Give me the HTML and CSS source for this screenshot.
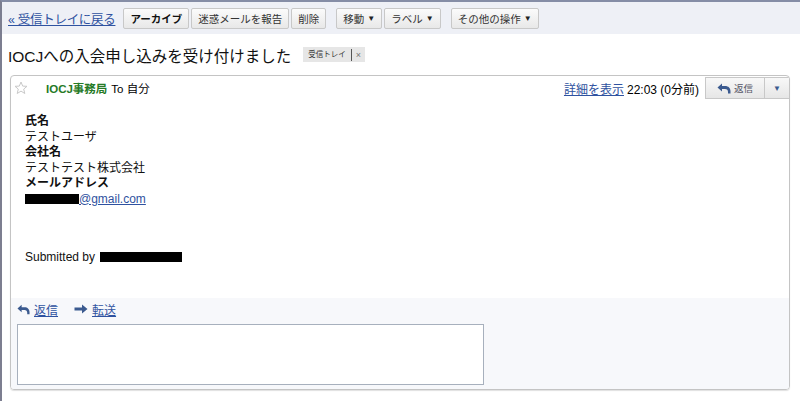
FILE: index.html
```html
<!DOCTYPE html>
<html lang="ja">
<head>
<meta charset="utf-8">
<link rel="stylesheet" href="styles.css">
</head>
<body>
<div class="page">
  <div class="toolbar">
    <a class="back" href="#">« 受信トレイに戻る</a>
    <div class="group">
      <span class="btn bold">アーカイブ</span>
      <span class="btn">迷惑メールを報告</span>
      <span class="btn">削除</span>
    </div>
    <div class="group">
      <span class="btn">移動 <span class="tri">▼</span></span>
      <span class="btn">ラベル <span class="tri">▼</span></span>
    </div>
    <div class="group">
      <span class="btn">その他の操作 <span class="tri">▼</span></span>
    </div>
  </div>
  <div class="subject-row">
    <h1 class="subject">IOCJへの入会申し込みを受け付けました</h1>
    <span class="chip"><span class="chip-name">受信トレイ</span><span class="chip-x">×</span></span>
  </div>
  <div class="card">
    <div class="head">
      <svg class="star" width="14" height="14" viewBox="0 0 14 14"><path d="M7 1 L8.7 5.1 L13 5.3 L9.7 8.1 L10.8 12.5 L7 10.1 L3.2 12.5 L4.3 8.1 L1 5.3 L5.3 5.1 Z" fill="#fff" stroke="#c8c8c8" stroke-width="1"/></svg>
      <span class="sender">IOCJ事務局</span>
      <span class="to">To 自分</span>
      <span class="spacer"></span>
      <a class="details" href="#">詳細を表示</a>
      <span class="time">22:03 (0分前)</span>
      <div class="reply-group">
        <span class="rbtn"><svg width="14" height="11" viewBox="0 0 14 11"><path d="M5 0.5 L0.5 4.5 L5 8.5 L5 6 L8 6 C10 6 11 7.2 11 9 L11 10.5 L13.5 10.5 L13.5 8.5 C13.5 5.2 11.5 3 8 3 L5 3 Z" fill="#3b5a8f"/></svg><span class="rtext">返信</span></span>
        <span class="rdrop">▼</span>
      </div>
    </div>
    <div class="body">
      <div class="b">氏名</div>
      <div>テストユーザ</div>
      <div class="b">会社名</div>
      <div>テストテスト株式会社</div>
      <div class="b">メールアドレス</div>
      <div><a class="mail" href="#"><span class="redact r1"></span>@gmail.com</a></div>
      <div class="submitted">Submitted by <span class="redact r2"></span></div>
    </div>
    <div class="foot">
      <div class="actions">
        <a class="act" href="#"><svg width="13" height="11" viewBox="0 0 14 11"><path d="M5 0.5 L0.5 4.5 L5 8.5 L5 6 L8 6 C10 6 11 7.2 11 9 L11 10.5 L13.5 10.5 L13.5 8.5 C13.5 5.2 11.5 3 8 3 L5 3 Z" fill="#3b5a8f"/></svg><span class="u">返信</span></a>
        <a class="act" href="#"><svg width="14" height="10" viewBox="0 0 14 10"><path d="M0.5 3.5 L8 3.5 L8 0.5 L13.5 5 L8 9.5 L8 6.5 L0.5 6.5 Z" fill="#3b5a8f"/></svg><span class="u">転送</span></a>
      </div>
      <div class="reply-box"></div>
    </div>
  </div>
</div>
</body>
</html>
```
FILE: styles.css
```css
html, body {
  margin: 0;
  padding: 0;
  background: #fff;
}
body {
  font-family: "Liberation Sans", "Noto Sans CJK JP", sans-serif;
  font-size: 12px;
  color: #000;
}
.page {
  width: 798px;
  height: 399px;
  border-left: 2px solid #7c7e90;
  border-top: 2px solid #858da6;
  overflow: hidden;
}
.toolbar {
  height: 32px;
  background: #eef0f6;
  display: flex;
  align-items: center;
  padding-left: 6px;
  gap: 10px;
}
.back {
  color: #2f52a0;
  font-size: 12.5px;
  text-decoration: underline;
  margin-right: -2px;
  letter-spacing: -0.3px;
}
.group {
  display: flex;
  gap: 2px;
}
.btn {
  display: inline-flex;
  align-items: center;
  height: 19px;
  padding: 0 6px;
  font-size: 10.5px;
  color: #333;
  background: linear-gradient(#fbfbfb, #e8e8e8);
  border: 1px solid #c8c8c8;
  border-radius: 2px;
  white-space: nowrap;
}
.btn.bold {
  font-weight: bold;
  color: #111;
}
.tri {
  font-size: 8px;
  margin-left: 3px;
  color: #222;
}
.subject-row {
  display: flex;
  align-items: center;
  height: 41px;
  padding-left: 6px;
}
.subject {
  margin: 0;
  font-weight: normal;
  font-size: 15.5px;
  color: #111;
}
.chip {
  display: inline-flex;
  align-items: center;
  margin-left: 12px;
  height: 15px;
  background: #e6e6e6;
  font-size: 7.5px;
  color: #333;
}
.chip-name {
  padding: 0 5px;
  border-right: 1px solid #555;
  line-height: 12px;
}
.chip-x {
  padding: 0 4px;
  font-size: 9px;
  color: #777;
}
.card {
  margin-left: 8px;
  width: 778px;
  height: 313px;
  border: 1px solid #c4c4c4;
  border-radius: 4px;
  box-shadow: 0 1px 1px #e0e0e0;
  display: flex;
  flex-direction: column;
  overflow: hidden;
}
.head {
  display: flex;
  align-items: center;
  height: 24px;
  padding-left: 3px;
}
.star {
  margin-right: 18px;
}
.sender {
  color: #267a26;
  font-weight: bold;
  font-size: 11.5px;
  margin-right: 4px;
}
.to {
  font-size: 11.5px;
}
.spacer {
  flex: 1;
}
.details {
  color: #2f52a0;
  text-decoration: underline;
  margin-right: 3px;
}
.time {
  margin-right: 6px;
}
.reply-group {
  display: flex;
  align-self: flex-start;
  height: 22px;
  margin-top: 1px;
}
.rbtn {
  display: flex;
  align-items: center;
  gap: 3px;
  width: 58px;
  justify-content: center;
  background: linear-gradient(#f8f8f8, #e6e6e6);
  border: 1px solid #c8c8c8;
  border-right: none;
}
.rtext {
  font-size: 9.5px;
  color: #556;
}
.rdrop {
  display: flex;
  align-items: center;
  justify-content: center;
  width: 24px;
  font-size: 8px;
  color: #3b5a8f;
  background: linear-gradient(#f8f8f8, #e6e6e6);
  border-top: 1px solid #c8c8c8;
  border-left: 1px solid #c8c8c8;
  border-bottom: 1px solid #c8c8c8;
}
.body {
  padding: 14px 0 0 14px;
  line-height: 15.5px;
  font-size: 12px;
  height: 198px;
  flex: none;
  box-sizing: border-box;
  color: #111;
}
.b {
  font-weight: bold;
}
.mail {
  color: #2f52a0;
  text-decoration: underline;
}
.redact {
  display: inline-block;
  background: #000;
  vertical-align: -1px;
}
.r1 {
  width: 54px;
  height: 10px;
}
.r2 {
  width: 82px;
  height: 10px;
  margin-left: 2px;
}
.submitted {
  margin-top: 43px;
}
.foot {
  flex: 1;
  background: #f7f8fb;
  padding: 2px 0 0 6px;
}
.actions {
  display: flex;
  gap: 16px;
  height: 18px;
  align-items: center;
}
.act {
  display: flex;
  align-items: center;
  gap: 4px;
  color: #2f52a0;
}
.u {
  text-decoration: underline;
}
.reply-box {
  margin-top: 6px;
  width: 465px;
  height: 59px;
  border: 1px solid #a7b0bd;
  background: #fff;
}
```
